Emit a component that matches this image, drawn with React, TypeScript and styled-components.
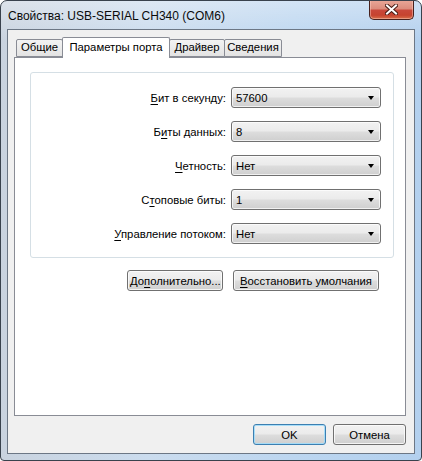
import * as React from "react";
import styled, { createGlobalStyle } from "styled-components";

const GlobalStyle = createGlobalStyle`
  html, body {
    margin: 0;
    padding: 0;
    background: #ffffff;
  }
  body {
    font-family: "Liberation Sans", Arial, sans-serif;
    font-size: 11.3px;
    color: #000000;
  }
`;

const Window = styled.div`
  width: 422px;
  height: 461px;
  box-sizing: border-box;
  display: flex;
  flex-direction: column;
  padding: 0 6px 6px;
  border: 1px solid #39424d;
  border-radius: 7px 7px 4px 4px;
  background:
    linear-gradient(to bottom, rgba(255, 255, 255, 0.35), rgba(255, 255, 255, 0) 40px),
    linear-gradient(to right, #c9d3df 0%, #cbdcee 35%, #bcd6f0 70%, #b3d0ee 100%);
  overflow: hidden;
`;

const TitleBar = styled.div`
  height: 28px;
  display: flex;
  align-items: flex-start;
`;

const Title = styled.div`
  flex: 1;
  align-self: center;
  padding-left: 1px;
  margin-top: 1px;
  font-size: 12px;
  color: #0b0b0b;
  white-space: nowrap;
`;

const CloseButton = styled.div`
  width: 43px;
  height: 19px;
  margin: -1px 1px 0 0;
  display: flex;
  align-items: center;
  justify-content: center;
  border: 1px solid #47211d;
  border-top: none;
  border-radius: 0 0 5px 5px;
  background: linear-gradient(
    to bottom,
    #e9a899 0%,
    #dc8d7d 45%,
    #c9483a 55%,
    #c6432f 80%,
    #d8704a 100%
  );
  box-shadow: inset 0 0 0 1px rgba(255, 210, 200, 0.45);
`;

const Client = styled.div`
  flex: 1;
  display: flex;
  flex-direction: column;
  background: #f0f0f0;
  border: 1px solid #6c7785;
  padding: 7px 8px 0 6px;
`;

const TabRow = styled.div`
  display: flex;
  align-items: flex-end;
  height: 20px;
  padding-left: 2px;
  position: relative;
  z-index: 1;
`;

const Tab = styled.div<{ $active?: boolean; $width: number }>`
  box-sizing: border-box;
  width: ${(p) => p.$width}px;
  height: ${(p) => (p.$active ? "21px" : "18px")};
  margin: ${(p) => (p.$active ? "0 0 -1px -1px" : "0 0 0 -1px")};
  padding-top: ${(p) => (p.$active ? "3px" : "1px")};
  text-align: center;
  border: 1px solid #898c95;
  border-bottom: ${(p) => (p.$active ? "none" : "1px solid #898c95")};
  border-radius: 2px 2px 0 0;
  background: ${(p) =>
    p.$active ? "#ffffff" : "linear-gradient(to bottom, #f3f3f3, #e3e3e3)"};
  white-space: nowrap;
  position: relative;
  z-index: ${(p) => (p.$active ? 2 : 1)};
  &:first-child {
    margin-left: 0;
  }
`;

const Panel = styled.div`
  height: 359px;
  box-sizing: border-box;
  background: #ffffff;
  border: 1px solid #898c95;
  padding: 14px 11px 0 15px;
`;

const Group = styled.div`
  border: 1px solid #d5dfe5;
  border-radius: 3px;
  padding: 14px 12px 13px 0;
  display: grid;
  grid-template-columns: 1fr 150px;
  column-gap: 5px;
  row-gap: 13px;
  align-items: center;
`;

const Label = styled.label`
  text-align: right;
  white-space: nowrap;
`;

const Key = styled.span`
  text-decoration: underline;
  text-underline-offset: 2px;
`;

const Combo = styled.div`
  box-sizing: border-box;
  height: 21px;
  display: flex;
  align-items: center;
  padding: 0 6px 0 4px;
  border: 1px solid #707070;
  border-radius: 3px;
  background: linear-gradient(
    to bottom,
    #f2f2f2 0%,
    #ebebeb 48%,
    #dddddd 52%,
    #cfcfcf 100%
  );
  box-shadow: inset 0 0 0 1px rgba(255, 255, 255, 0.7);
`;

const ComboText = styled.span`
  flex: 1;
`;

const Arrow = styled.span`
  width: 0;
  height: 0;
  border-left: 3.5px solid transparent;
  border-right: 3.5px solid transparent;
  border-top: 4px solid #000000;
  margin-top: 1px;
`;

const ActionRow = styled.div`
  display: flex;
  justify-content: flex-end;
  gap: 10px;
  margin-top: 12px;
  padding-right: 15px;
`;

const Button = styled.button<{ $default?: boolean; $width: number }>`
  box-sizing: border-box;
  width: ${(p) => p.$width}px;
  height: 21px;
  padding: 0 2px;
  font: inherit;
  color: #000000;
  border: 1px solid ${(p) => (p.$default ? "#3c7fb1" : "#707070")};
  border-radius: 3px;
  background: linear-gradient(
    to bottom,
    #f2f2f2 0%,
    #ebebeb 48%,
    #dddddd 52%,
    #cfcfcf 100%
  );
  box-shadow: inset 0 0 0 1px
    ${(p) => (p.$default ? "rgba(160, 220, 250, 0.9)" : "rgba(252, 252, 252, 0.8)")};
  white-space: nowrap;
`;

const Footer = styled.div`
  flex: 1;
  display: flex;
  justify-content: flex-end;
  align-items: flex-start;
  gap: 7px;
  padding-top: 8px;
`;

const tabs = [
  { title: "Общие", width: 47 },
  { title: "Параметры порта", width: 108, active: true },
  { title: "Драйвер", width: 56 },
  { title: "Сведения", width: 58 },
];

const settings = [
  { pre: "", key: "Б", post: "ит в секунду:", value: "57600" },
  { pre: "Б", key: "и", post: "ты данных:", value: "8" },
  { pre: "", key: "Ч", post: "етность:", value: "Нет" },
  { pre: "С", key: "т", post: "оповые биты:", value: "1" },
  { pre: "", key: "У", post: "правление потоком:", value: "Нет" },
];

function CloseGlyph() {
  return (
    <svg width="13" height="11" viewBox="0 0 13 11">
      <path
        d="M2 1.5 L11 9.5 M11 1.5 L2 9.5"
        stroke="#4a1e16"
        strokeWidth="4"
        strokeLinecap="square"
      />
      <path
        d="M2 1.5 L11 9.5 M11 1.5 L2 9.5"
        stroke="#ffffff"
        strokeWidth="2"
        strokeLinecap="square"
      />
    </svg>
  );
}

export default function App() {
  return (
    <>
      <GlobalStyle />
      <Window>
        <TitleBar>
          <Title>Свойства: USB-SERIAL CH340 (COM6)</Title>
          <CloseButton>
            <CloseGlyph />
          </CloseButton>
        </TitleBar>
        <Client>
          <TabRow>
            {tabs.map((t) => (
              <Tab key={t.title} $active={t.active} $width={t.width}>
                {t.title}
              </Tab>
            ))}
          </TabRow>
          <Panel>
            <Group>
              {settings.map((s) => (
                <React.Fragment key={s.post}>
                  <Label>
                    {s.pre}
                    <Key>{s.key}</Key>
                    {s.post}
                  </Label>
                  <Combo>
                    <ComboText>{s.value}</ComboText>
                    <Arrow />
                  </Combo>
                </React.Fragment>
              ))}
            </Group>
            <ActionRow>
              <Button $width={96}>
                До<Key>п</Key>олнительно...
              </Button>
              <Button $width={146}>
                <Key>В</Key>осстановить умолчания
              </Button>
            </ActionRow>
          </Panel>
          <Footer>
            <Button $default $width={73}>
              OK
            </Button>
            <Button $width={73}>Отмена</Button>
          </Footer>
        </Client>
      </Window>
    </>
  );
}
